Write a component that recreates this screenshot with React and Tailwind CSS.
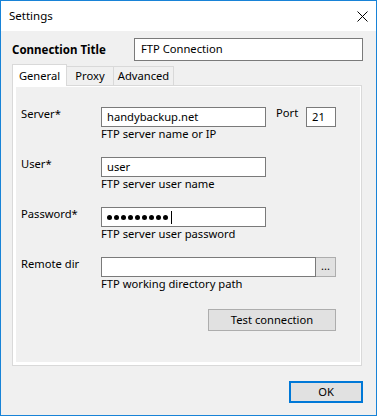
import React from 'react'

const font = { fontFamily: '"Noto Sans", "Open Sans", sans-serif' }

function Field({ label, hint, width = 'w-[165px]', children, extra }) {
  return (
    <div className="flex items-start">
      <div className="w-[80px] leading-[16px] mt-[-1px]">{label}</div>
      <div className="flex flex-col">
        <div className="flex items-start">
          <div className={`${width} h-[20px] bg-white border border-[#7a7a7a] flex items-center px-[5px] leading-[16px]`}>
            {children}
          </div>
          {extra}
        </div>
        <div className="leading-[14px] h-[14px]">{hint}</div>
      </div>
    </div>
  )
}

export default function App() {
  return (
    <div
      className="w-[377px] h-[416px] border border-[#1883d7] flex flex-col bg-[#f0f0f0] text-[11.2px] text-black"
      style={font}
    >
      <div className="h-[30px] bg-white flex items-center justify-between pl-[8px] pr-[9px]">
        <span className="leading-[16px] text-[11.5px]">Settings</span>
        <svg width="11" height="11" viewBox="0 0 11 11" className="mr-[-1px]">
          <path d="M0.5 0.5 L10.5 10.5 M10.5 0.5 L0.5 10.5" stroke="#000" strokeWidth="1" fill="none" />
        </svg>
      </div>

      <div className="flex-1 pl-[11px] pr-[13px] flex flex-col">
        <div className="flex items-center mt-[7px]">
          <div className="w-[122px] font-bold text-[11.5px]">Connection Title</div>
          <div className="w-[229px] h-[23px] bg-white border border-[#7a7a7a] flex items-center px-[6px]">
            FTP Connection
          </div>
        </div>

        <div className="flex items-end h-[21px] mt-[3px] relative z-10">
          <div className="w-[55px] h-[22px] bg-white border border-b-0 border-[#d9d9d9] flex items-center justify-center leading-[16px] mb-[-1px]">
            General
          </div>
          <div className="w-[47px] h-[19px] bg-[#f0f0f0] border border-b-0 border-l-0 border-[#d9d9d9] flex items-center justify-center leading-[16px]">
            Proxy
          </div>
          <div className="w-[60px] h-[19px] bg-[#f0f0f0] border border-b-0 border-l-0 border-[#d9d9d9] flex items-center justify-center leading-[16px]">
            Advanced
          </div>
        </div>

        <div className="w-[350px] h-[281px] border border-[#d9d9d9] bg-white pl-[3px] pr-[1px] pt-[1px] pb-[3px]">
          <div className="h-full bg-[#f0f0f0] pl-[5px] pt-[20px] flex flex-col">
            <Field
              label="Server*"
              hint="FTP server name or IP"
              extra={
                <div className="flex items-start ml-[10px]">
                  <span className="leading-[16px] w-[30px] mt-[-2px]">Port</span>
                  <div className="w-[30px] h-[20px] bg-white border border-[#7a7a7a] flex items-center px-[5px]">21</div>
                </div>
              }
            >
              handybackup.net
            </Field>
            <div className="h-[16px]" />
            <Field label="User*" hint="FTP server user name">user</Field>
            <div className="h-[16px]" />
            <Field label="Password*" hint="FTP server user password">
              <div className="flex items-center gap-[2px]">
                {Array.from({ length: 9 }).map((_, i) => (
                  <span key={i} className="w-[5px] h-[5px] rounded-full bg-black" />
                ))}
                <span className="w-[1px] h-[13px] bg-black ml-[1px]" />
              </div>
            </Field>
            <div className="h-[16px]" />
            <Field
              label="Remote dir"
              hint="FTP working directory path"
              width="w-[215px]"
              extra={
                <div className="w-[20px] h-[20px] bg-[#e1e1e1] border border-[#adadad] border-l-0 flex items-center justify-center text-[11px] leading-[10px] pb-[3px]">
                  ...
                </div>
              }
            />
            <div className="flex justify-end pr-[24px] mt-[18px]">
              <div className="w-[128px] h-[22px] bg-[#e1e1e1] border border-[#adadad] flex items-center justify-center">
                Test connection
              </div>
            </div>
          </div>
        </div>

        <div className="flex justify-end mt-[15px]">
          <div className="w-[74px] h-[22px] bg-[#e1e1e1] border-2 border-[#0078d7] flex items-center justify-center">
            OK
          </div>
        </div>
      </div>
    </div>
  )
}
